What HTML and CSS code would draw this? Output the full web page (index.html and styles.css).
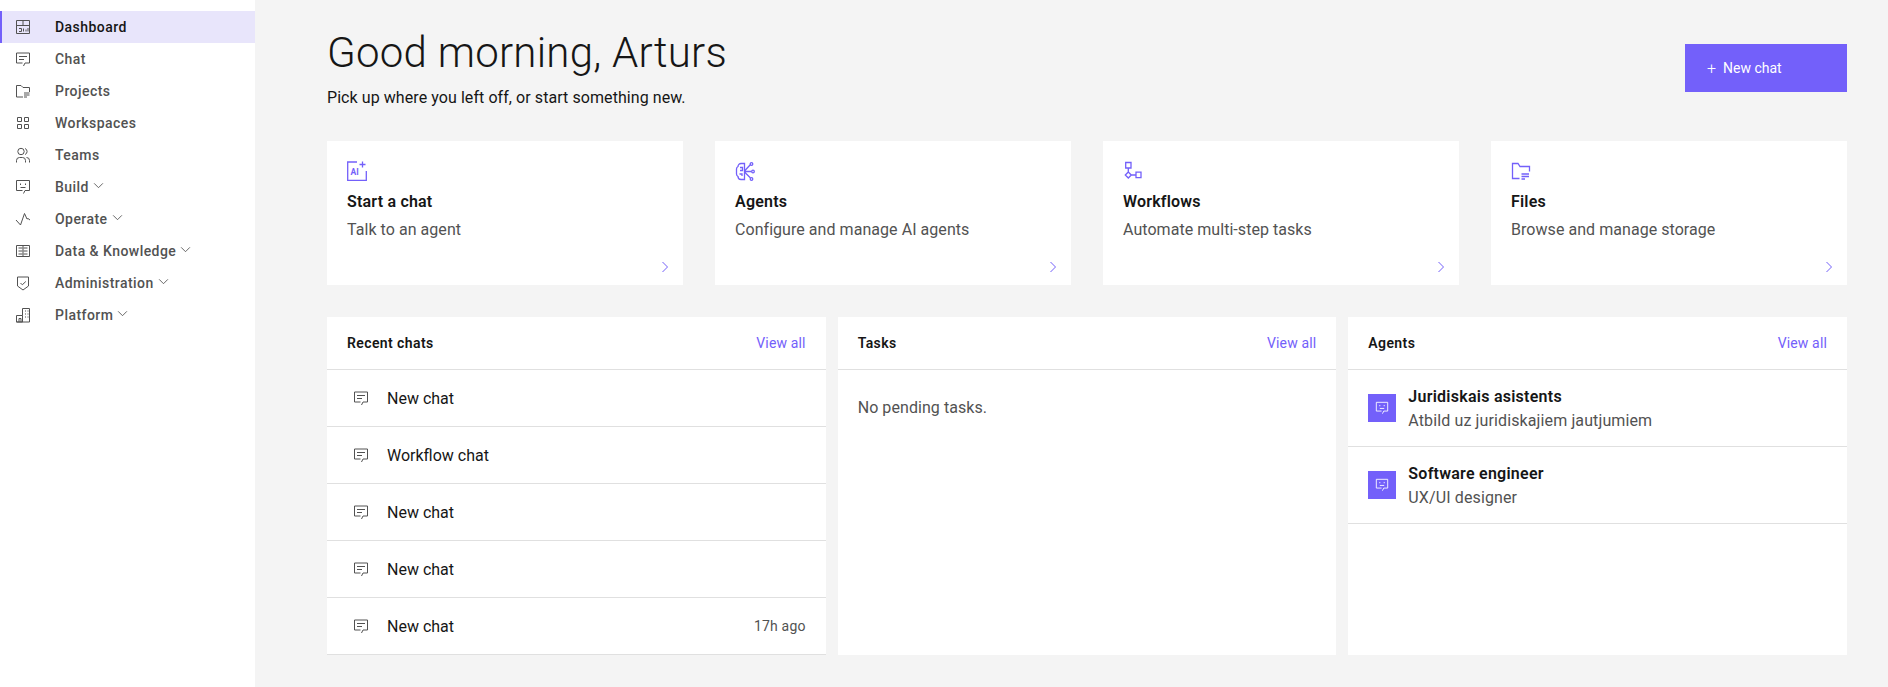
FILE: index.html
```html
<!DOCTYPE html>
<html lang="en">
<head>
  <meta charset="UTF-8" />
  <meta name="viewport" content="width=device-width, initial-scale=1.0"/>
  <title>Dashboard</title>
  <link rel="stylesheet" href="styles.css">
</head>
<body>

  <svg class="sprite" xmlns="http://www.w3.org/2000/svg">
    <symbol id="i-dashboard" viewBox="0 0 16 16">
      <path d="M1.500 1.500h13v13h-13zM1.500 6.500h13M8 1.500v5M4 9.500h2.500v3H4M8.500 9.500v3M11 10.500v2M13 9v3.500" />
    </symbol>
    <symbol id="i-chat" viewBox="0 0 16 16">
      <path d="M8.500 15l1.500-3h4.500V2h-13v10h6M4 5.500h8M4 8.500h5" />
    </symbol>
    <symbol id="i-folder" viewBox="0 0 16 16">
      <path d="M8 14H1.500V2.500h4.500l2 2h6.500v4.500M9 10h5.500M9 12h5.500M9 14h3" />
    </symbol>
    <symbol id="i-grid" viewBox="0 0 16 16">
      <path d="M2.500 2.500h4v4h-4zM9.500 2.500h4v4h-4zM2.500 9.500h4v4h-4zM9.500 9.500h4v4h-4z" />
    </symbol>
    <symbol id="i-teams" viewBox="0 0 16 16">
      <circle cx="6" cy="4.500" r="3.200" />
      <path d="M1.500 15.500v-2a3 3 0 0 1 3-3h3a3 3 0 0 1 3 3v2M10 1.500a3.200 3.200 0 0 1 0 6M11.500 10.500a3 3 0 0 1 3 3v2" />
    </symbol>
    <symbol id="i-bot" viewBox="0 0 16 16">
      <path d="M8.500 14.500l1.500-3h4.500v-10h-13v10h6M5.500 8.500h5" />
      <path d="M5.500 4.500v1.500M10.500 4.500v1.500" />
    </symbol>
    <symbol id="i-activity" viewBox="0 0 16 16">
      <path d="M1 9l4.500 5 4-11.500 2.500 5.500 1-.5 2 1.500" />
    </symbol>
    <symbol id="i-data" viewBox="0 0 16 16">
      <path d="M1.500 2.500h13v11h-13zM3.500 5h4M3.500 8h4M3.500 11h4M8.500 5h4M8.500 8h4M8.500 11h4M8 2.500v11" />
    </symbol>
    <symbol id="i-shield" viewBox="0 0 16 16">
      <path d="M2.500 2h11v9l-5.500 4-5.500-4zM5.500 8l1.800 1.800 3.500-3.300" />
    </symbol>
    <symbol id="i-building" viewBox="0 0 16 16">
      <path d="M1.500 15v-6.500h6V15zM1.500 15h13V1.500h-7v7M4 15v-3.500h2V15M10 4h1M12.500 4h1M10 7h1M12.500 7h1M10 10h1M12.500 10h1" />
    </symbol>
    <symbol id="i-down" viewBox="0 0 12 8">
      <path d="M1 1.500l5 5 5-5" />
    </symbol>
    <symbol id="i-right" viewBox="0 0 16 16">
      <path d="M5.500 3l5 5-5 5" />
    </symbol>
    <symbol id="i-ai" viewBox="0 0 20 20">
      <path d="M10 1H.7v18.300H19.300V10" />
      <path d="M15.500.5v6M12.500 3.500h6" />
      <text class="ai-mark" x="3.500" y="14" font-size="8.500">AI</text>
    </symbol>
    <symbol id="i-agents" viewBox="0 0 20 20">
      <path d="M9.500 2.500H6a3 3 0 0 0-3 3A3 3 0 0 0 1.500 8v5A3 3 0 0 0 3 15.500a3 3 0 0 0 3 3h3.500z" />
      <path d="M5 6.500h2.500v3H5M4.500 13H7v2M9.500 10.500h7M9.500 10l6-6.500M9.500 11l6 6" />
      <circle cx="16.500" cy="3" r="1.300" />
      <circle cx="18" cy="10.500" r="1.300" />
      <circle cx="16.500" cy="18" r="1.300" />
    </symbol>
    <symbol id="i-flow" viewBox="0 0 20 20">
      <path d="M2.700 1.500H8v5.500H2.700zM5.300 7v4M5.300 11l3 3-3 3-3-3zM8.300 14H13M13 11.200h5v5.500h-5z" />
    </symbol>
    <symbol id="i-files" viewBox="0 0 20 20">
      <path d="M8.500 17.500h-7v-15h5.500l2 3h9.500v5M10.500 13H18M10.500 15.500H18M10.500 18H14" />
    </symbol>
  </svg>

  <div class="app">
    <nav class="sidebar">
      <a class="nav-item active"><svg class="nav-icon"><use href="#i-dashboard"/></svg><span>Dashboard</span></a>
      <a class="nav-item"><svg class="nav-icon"><use href="#i-chat"/></svg><span>Chat</span></a>
      <a class="nav-item"><svg class="nav-icon"><use href="#i-folder"/></svg><span>Projects</span></a>
      <a class="nav-item"><svg class="nav-icon"><use href="#i-grid"/></svg><span>Workspaces</span></a>
      <a class="nav-item"><svg class="nav-icon"><use href="#i-teams"/></svg><span>Teams</span></a>
      <a class="nav-item"><svg class="nav-icon"><use href="#i-bot"/></svg><span>Build</span><svg class="nav-caret"><use href="#i-down"/></svg></a>
      <a class="nav-item"><svg class="nav-icon"><use href="#i-activity"/></svg><span>Operate</span><svg class="nav-caret"><use href="#i-down"/></svg></a>
      <a class="nav-item"><svg class="nav-icon"><use href="#i-data"/></svg><span>Data &amp; Knowledge</span><svg class="nav-caret"><use href="#i-down"/></svg></a>
      <a class="nav-item"><svg class="nav-icon"><use href="#i-shield"/></svg><span>Administration</span><svg class="nav-caret"><use href="#i-down"/></svg></a>
      <a class="nav-item"><svg class="nav-icon"><use href="#i-building"/></svg><span>Platform</span><svg class="nav-caret"><use href="#i-down"/></svg></a>
    </nav>

    <main class="content">
      <header class="page-head">
        <div>
          <h1>Good morning, Arturs</h1>
          <p class="subtitle">Pick up where you left off, or start something new.</p>
        </div>
        <button class="new-btn"><span class="plus">+</span>New chat</button>
      </header>

      <section class="cards">
        <a class="card">
          <svg class="card-icon"><use href="#i-ai"/></svg>
          <h3>Start a chat</h3>
          <p>Talk to an agent</p>
          <svg class="card-arrow"><use href="#i-right"/></svg>
        </a>
        <a class="card">
          <svg class="card-icon"><use href="#i-agents"/></svg>
          <h3>Agents</h3>
          <p>Configure and manage AI agents</p>
          <svg class="card-arrow"><use href="#i-right"/></svg>
        </a>
        <a class="card">
          <svg class="card-icon"><use href="#i-flow"/></svg>
          <h3>Workflows</h3>
          <p>Automate multi-step tasks</p>
          <svg class="card-arrow"><use href="#i-right"/></svg>
        </a>
        <a class="card">
          <svg class="card-icon"><use href="#i-files"/></svg>
          <h3>Files</h3>
          <p>Browse and manage storage</p>
          <svg class="card-arrow"><use href="#i-right"/></svg>
        </a>
      </section>

      <section class="panels">
        <div class="panel">
          <div class="panel-head"><h4>Recent chats</h4><a class="view-all">View all</a></div>
          <div class="chat-row"><svg class="row-icon"><use href="#i-chat"/></svg><span>New chat</span></div>
          <div class="chat-row"><svg class="row-icon"><use href="#i-chat"/></svg><span>Workflow chat</span></div>
          <div class="chat-row"><svg class="row-icon"><use href="#i-chat"/></svg><span>New chat</span></div>
          <div class="chat-row"><svg class="row-icon"><use href="#i-chat"/></svg><span>New chat</span></div>
          <div class="chat-row"><svg class="row-icon"><use href="#i-chat"/></svg><span>New chat</span><time>17h ago</time></div>
        </div>

        <div class="panel">
          <div class="panel-head"><h4>Tasks</h4><a class="view-all">View all</a></div>
          <p class="empty">No pending tasks.</p>
        </div>

        <div class="panel">
          <div class="panel-head"><h4>Agents</h4><a class="view-all">View all</a></div>
          <div class="agent-row">
            <div class="agent-badge"><svg><use href="#i-bot"/></svg></div>
            <div class="agent-text">
              <div class="agent-name">Juridiskais asistents</div>
              <div class="agent-desc">Atbild uz juridiskajiem jautjumiem</div>
            </div>
          </div>
          <div class="agent-row">
            <div class="agent-badge"><svg><use href="#i-bot"/></svg></div>
            <div class="agent-text">
              <div class="agent-name">Software engineer</div>
              <div class="agent-desc">UX/UI designer</div>
            </div>
          </div>
        </div>
      </section>
    </main>
  </div>

</body>
</html>
```

FILE: styles.css
```css
* {
  box-sizing: border-box;
}

body {
  margin: 0;
  font-family: Roboto, "Liberation Sans", sans-serif;
  font-size: 16px;
  color: #161616;
  background-color: #f4f4f4;
}

svg {
  fill: none;
  stroke: currentColor;
  stroke-width: 1;
}

.sprite {
  display: none;
}

.ai-mark {
  fill: currentColor;
  stroke: none;
  font-family: Roboto, sans-serif;
  font-weight: 700;
}

.app {
  display: flex;
  height: 687px;
  overflow: hidden;
}

/* sidebar */

.sidebar {
  width: 255px;
  flex-shrink: 0;
  padding-top: 11px;
  background-color: white;
}

.nav-item {
  display: flex;
  align-items: center;
  height: 32px;
  padding-left: 15px;
  font-size: 14px;
  font-weight: 500;
  letter-spacing: 0.45px;
  color: #525252;
}

.nav-item.active {
  padding-left: 13px;
  border-left: 2px solid #7360fa;
  background-color: #e8e5fb;
  color: #161616;
}

.nav-icon {
  width: 16px;
  height: 16px;
  margin-right: 24px;
  color: #525252;
}

.nav-caret {
  width: 11px;
  height: 7px;
  margin: 0 0 4px 4px;
}

/* main column */

.content {
  flex: 1;
  min-width: 0;
  padding: 28px 41px 0 72px;
}

.page-head {
  display: flex;
  justify-content: space-between;
  align-items: flex-start;
  height: 113px;
}

h1 {
  margin: 0;
  font-size: 42px;
  font-weight: 300;
  line-height: 50px;
  letter-spacing: 0.25px;
}

.subtitle {
  margin: 8px 0 0 0;
  font-size: 16px;
  line-height: 24px;
  letter-spacing: 0.07px;
}

.new-btn {
  display: flex;
  align-items: center;
  width: 162px;
  height: 48px;
  margin-top: 16px;
  padding: 0 0 0 15px;
  border: none;
  background-color: #7360fa;
  color: white;
  font-family: inherit;
  font-size: 14px;
}

.plus {
  width: 23px;
  font-size: 16px;
  font-weight: 300;
}

/* shortcut cards */

.cards {
  display: grid;
  grid-template-columns: repeat(4, 1fr);
  gap: 32px;
}

.card {
  display: flex;
  flex-direction: column;
  height: 144px;
  padding: 20px 10px 10px 20px;
  background-color: white;
}

.card-icon {
  width: 20px;
  height: 20px;
  stroke-width: 1.3;
  color: #7360fa;
}

.card h3 {
  margin: 10px 0 0 0;
  font-size: 16px;
  font-weight: 600;
  line-height: 22px;
  letter-spacing: 0.2px;
}

.card p {
  margin: 6px 0 0 0;
  font-size: 16px;
  line-height: 22px;
  letter-spacing: 0.05px;
  color: #525252;
}

.card-arrow {
  width: 16px;
  height: 16px;
  margin-top: auto;
  align-self: flex-end;
  color: #7360fa;
}

/* bottom panels */

.panels {
  display: grid;
  grid-template-columns: repeat(3, 1fr);
  gap: 12px;
  margin-top: 32px;
}

.panel {
  height: 338px;
  background-color: white;
}

.panel-head {
  display: flex;
  justify-content: space-between;
  align-items: center;
  height: 53px;
  padding: 0 20px;
  border-bottom: 1px solid #e0e0e0;
}

.panel-head h4 {
  margin: 0;
  font-size: 14px;
  font-weight: 600;
  letter-spacing: 0.4px;
}

.view-all {
  font-size: 14px;
  letter-spacing: 0.15px;
  color: #7360fa;
}

.chat-row {
  display: flex;
  align-items: center;
  height: 57px;
  padding: 0 20px 0 26px;
  border-bottom: 1px solid #e0e0e0;
}

.row-icon {
  width: 16px;
  height: 16px;
  margin-right: 18px;
  color: #525252;
}

.chat-row time {
  margin-left: auto;
  font-size: 14px;
  letter-spacing: 0.2px;
  color: #525252;
}

.empty {
  margin: 0;
  padding: 27px 20px;
  line-height: 22px;
  letter-spacing: 0.07px;
  color: #525252;
}

.agent-row {
  display: flex;
  align-items: center;
  gap: 12px;
  height: 77px;
  padding: 0 20px;
  border-bottom: 1px solid #e0e0e0;
}

.agent-badge {
  display: flex;
  align-items: center;
  justify-content: center;
  width: 28px;
  height: 28px;
  background-color: #7360fa;
  color: white;
}

.agent-badge svg {
  width: 14px;
  height: 14px;
}

.agent-text {
  padding-top: 2px;
}

.agent-name {
  font-weight: 600;
  line-height: 24px;
  letter-spacing: 0.25px;
}

.agent-desc {
  line-height: 24px;
  letter-spacing: 0.12px;
  color: #525252;
}
```
